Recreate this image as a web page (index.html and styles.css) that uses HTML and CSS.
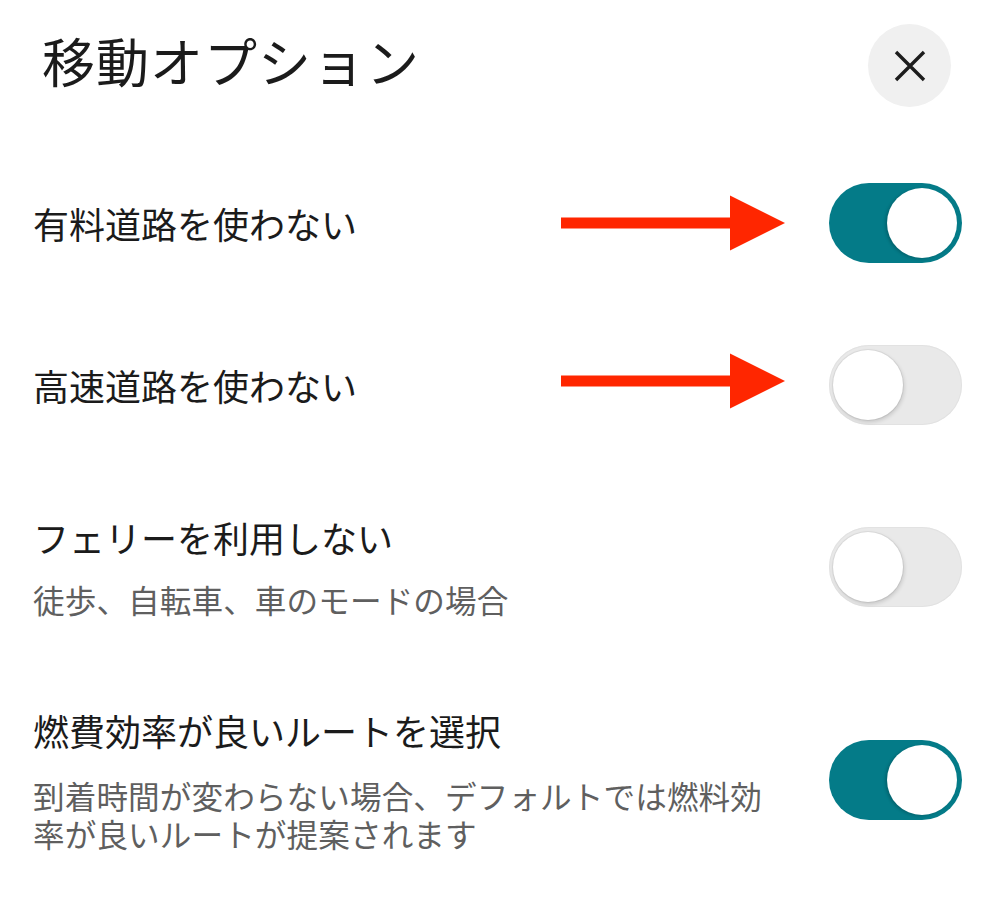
FILE: index.html
```html
<!DOCTYPE html>
<html lang="ja">
<head>
<meta charset="utf-8">
<title>移動オプション</title>
<link rel="stylesheet" href="styles.css">
</head>
<body>
<div class="sheet">
  <header class="header">
    <h1 class="title">移動オプション</h1>
    <button class="close" aria-label="閉じる">
      <svg width="32" height="32" viewBox="0 0 32 32"><path d="M2 2 L30 30 M30 2 L2 30" stroke="#1d1d1d" stroke-width="3.4" stroke-linecap="butt" fill="none"/></svg>
    </button>
  </header>
  <ul class="options">
    <li class="row row-1">
      <div class="text"><div class="label">有料道路を使わない</div></div>
      <svg class="arrow" width="224" height="56" viewBox="0 0 224 56"><rect x="0" y="22.5" width="172" height="11" fill="#ff2600"/><polygon points="169,0.5 224,28 169,55.5" fill="#ff2600"/></svg>
      <span class="toggle on"><span class="knob"></span></span>
    </li>
    <li class="row row-2">
      <div class="text"><div class="label">高速道路を使わない</div></div>
      <svg class="arrow arrow-up" width="224" height="56" viewBox="0 0 224 56"><rect x="0" y="22.5" width="172" height="11" fill="#ff2600"/><polygon points="169,0.5 224,28 169,55.5" fill="#ff2600"/></svg>
      <span class="toggle off"><span class="knob"></span></span>
    </li>
    <li class="row row-3">
      <div class="text">
        <div class="label">フェリーを利用しない</div>
        <div class="desc">徒歩、自転車、車のモードの場合</div>
      </div>
      <span class="toggle off"><span class="knob"></span></span>
    </li>
    <li class="row row-4">
      <div class="text">
        <div class="label">燃費効率が良いルートを選択</div>
        <div class="desc wide">到着時間が変わらない場合、デフォルトでは燃料効率が良いルートが提案されます</div>
      </div>
      <span class="toggle on"><span class="knob"></span></span>
    </li>
  </ul>
</div>
</body>
</html>
```
FILE: styles.css
```css
* { box-sizing: border-box; }
html, body { margin: 0; padding: 0; background: #ffffff; }
body {
  font-family: "Noto Sans CJK JP", "Noto Sans", sans-serif;
  color: #1b1b1b;
  width: 1000px;
  height: 912px;
  overflow: hidden;
}
.sheet { padding: 24px 38px 0 33px; }
.header {
  display: flex;
  align-items: center;
  justify-content: space-between;
  height: 83px;
}
.title {
  margin: 0 0 0 9px;
  font-size: 53px;
  font-weight: 400;
  line-height: 60px;
  letter-spacing: 1px;
  position: relative;
  top: -6px;
}
.close {
  width: 83px;
  height: 83px;
  border-radius: 50%;
  border: none;
  background: #f0f0f0;
  display: flex;
  align-items: center;
  justify-content: center;
  padding: 0;
  margin-right: 11px;
}
.options { list-style: none; margin: 33px 0 0; padding: 0; }
.row {
  display: flex;
  align-items: center;
  padding: 43px 0;
}
.row-1 { padding-bottom: 40px; }
.row-2 { padding-top: 42px; padding-bottom: 47px; }
.row-4 { padding-top: 47px; }
.text { flex: 1; min-width: 0; }
.label {
  font-size: 36px;
  line-height: 44px;
  letter-spacing: 0;
}
.desc {
  margin-top: 22px;
  font-size: 31.6px;
  line-height: 37px;
  letter-spacing: 0.1px;
  color: #5f5f5f;
}
.desc.wide { width: 740px; margin-top: 24px; line-height: 38px; }
.arrow { margin-right: 44px; flex: none; }
.arrow-up { margin-top: -8px; }
.toggle {
  flex: none;
  width: 133px;
  height: 80px;
  border-radius: 40px;
  position: relative;
  display: block;
}
.toggle.on { background: #047b88; }
.toggle.off { background: #e9e9e9; box-shadow: inset 0 0 0 1px #e2e2e2; }
.knob {
  position: absolute;
  top: 5px;
  width: 70px;
  height: 70px;
  border-radius: 50%;
  background: #ffffff;
}
.toggle.on .knob { right: 5px; box-shadow: -2px 1px 3px rgba(0,0,0,0.18); }
.toggle.off .knob { left: 4px; box-shadow: 1px 2px 4px rgba(0,0,0,0.16), 0 0 0 1px rgba(0,0,0,0.05); }
```
